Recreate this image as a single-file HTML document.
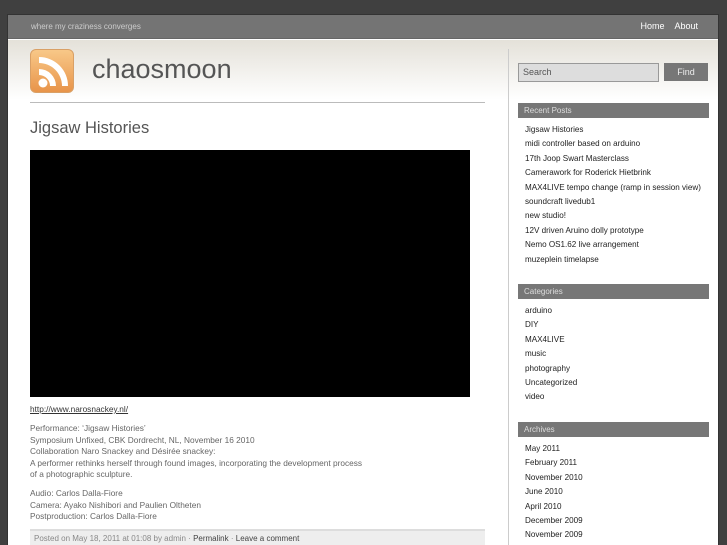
<!DOCTYPE html>
<html><head><style>
*{margin:0;padding:0;box-sizing:border-box}
html,body{width:727px;height:545px;overflow:hidden}
body{background:#404040;font-family:"Liberation Sans",sans-serif;position:relative}
#wrap{position:absolute;left:7px;top:14px;width:712px;height:531px;background:#fff;border:1px solid #333;border-bottom:none;overflow:hidden}
#top{position:absolute;left:0;top:0;width:710px;height:24px;background:#747474;border-bottom:1px solid #666}
#top .tag{position:absolute;left:23px;top:7px;font-size:8px;color:#ccc}
#top .nav{position:absolute;right:20px;top:6px;font-size:9px;color:#fff}
#top .nav span{margin-left:10px}
#hdr{position:absolute;left:0;top:25px;width:710px;height:60px;background:linear-gradient(#e4e1d9,#fff)}
#logo{position:absolute;left:22px;top:34px;width:44px;height:44px;border-radius:6px;background:linear-gradient(#f8c888,#e8944a);border:1px solid #d9a066}
#title{position:absolute;left:84px;top:39px;font-size:27px;color:#555}
#hr{position:absolute;left:22px;top:87px;width:455px;height:1px;background:#bbb}
#div{position:absolute;left:500px;top:34px;width:1px;height:510px;background:#ccc}
h1{position:absolute;left:22px;top:104px;font-size:16.5px;font-weight:normal;color:#555}
#vid{position:absolute;left:22px;top:135px;width:440px;height:247px;background:#000}
.txt{position:absolute;left:22px;font-size:8.3px;color:#666;line-height:11.5px}
#meta{position:absolute;left:22px;top:514px;width:455px;height:20px;background:#eee;border-top:2px solid #ddd;font-size:8px;color:#888;padding:3px 4px}
#meta b{color:#444;font-weight:normal}
#search{position:absolute;left:510px;top:48px;width:141px;height:19px;background:#ddd;border:1px solid #999;font-size:9px;color:#555;padding:3px 4px}
#find{position:absolute;left:656px;top:48px;width:44px;height:18px;background:#777;color:#eee;font-size:9px;text-align:center;line-height:18px}
.wh{position:absolute;left:510px;width:191px;height:15px;background:#777;color:#ddd;font-size:8px;padding:3px 6px}
.list{position:absolute;left:517px;font-size:8.1px;color:#222;line-height:14.4px}
</style></head><body>
<div id="wrap">
<div id="top"><span class="tag">where my craziness converges</span><span class="nav"><span>Home</span><span>About</span></span></div>
<div id="hdr"></div>
<div id="logo"><svg width="44" height="44" viewBox="0 0 44 44"><circle cx="12" cy="33" r="4.5" fill="#fff"/><path d="M8 19a17 17 0 0 1 17 17h-6a11 11 0 0 0-11-11z" fill="#fff"/><path d="M8 7a29 29 0 0 1 29 29h-6a23 23 0 0 0-23-23z" fill="#fff"/></svg></div>
<div id="title">chaosmoon</div>
<div id="hr"></div>
<div id="div"></div>
<h1>Jigsaw Histories</h1>
<div id="vid"></div>
<div class="txt" style="top:389px;color:#333;text-decoration:underline">http://www.narosnackey.nl/</div>
<div class="txt" style="top:408px">Performance: ‘Jigsaw Histories’<br>Symposium Unfixed, CBK Dordrecht, NL, November 16 2010<br>Collaboration Naro Snackey and Désirée snackey:<br>A performer rethinks herself through found images, incorporating the development process<br>of a photographic sculpture.</div>
<div class="txt" style="top:473px">Audio: Carlos Dalla-Fiore<br>Camera: Ayako Nishibori and Paulien Oltheten<br>Postproduction: Carlos Dalla-Fiore</div>
<div id="meta">Posted on May 18, 2011 at 01:08 by admin · <b>Permalink</b> · <b>Leave a comment</b></div>
<div id="search">Search</div><div id="find">Find</div>
<div class="wh" style="top:88px">Recent Posts</div>
<div class="list" style="top:108px">Jigsaw Histories<br>midi controller based on arduino<br>17th Joop Swart Masterclass<br>Camerawork for Roderick Hietbrink<br>MAX4LIVE tempo change (ramp in session view)<br>soundcraft livedub1<br>new studio!<br>12V driven Aruino dolly prototype<br>Nemo OS1.62 live arrangement<br>muzeplein timelapse</div>
<div class="wh" style="top:269px">Categories</div>
<div class="list" style="top:289px">arduino<br>DIY<br>MAX4LIVE<br>music<br>photography<br>Uncategorized<br>video</div>
<div class="wh" style="top:407px">Archives</div>
<div class="list" style="top:427px">May 2011<br>February 2011<br>November 2010<br>June 2010<br>April 2010<br>December 2009<br>November 2009</div>
</div>
</body></html>
